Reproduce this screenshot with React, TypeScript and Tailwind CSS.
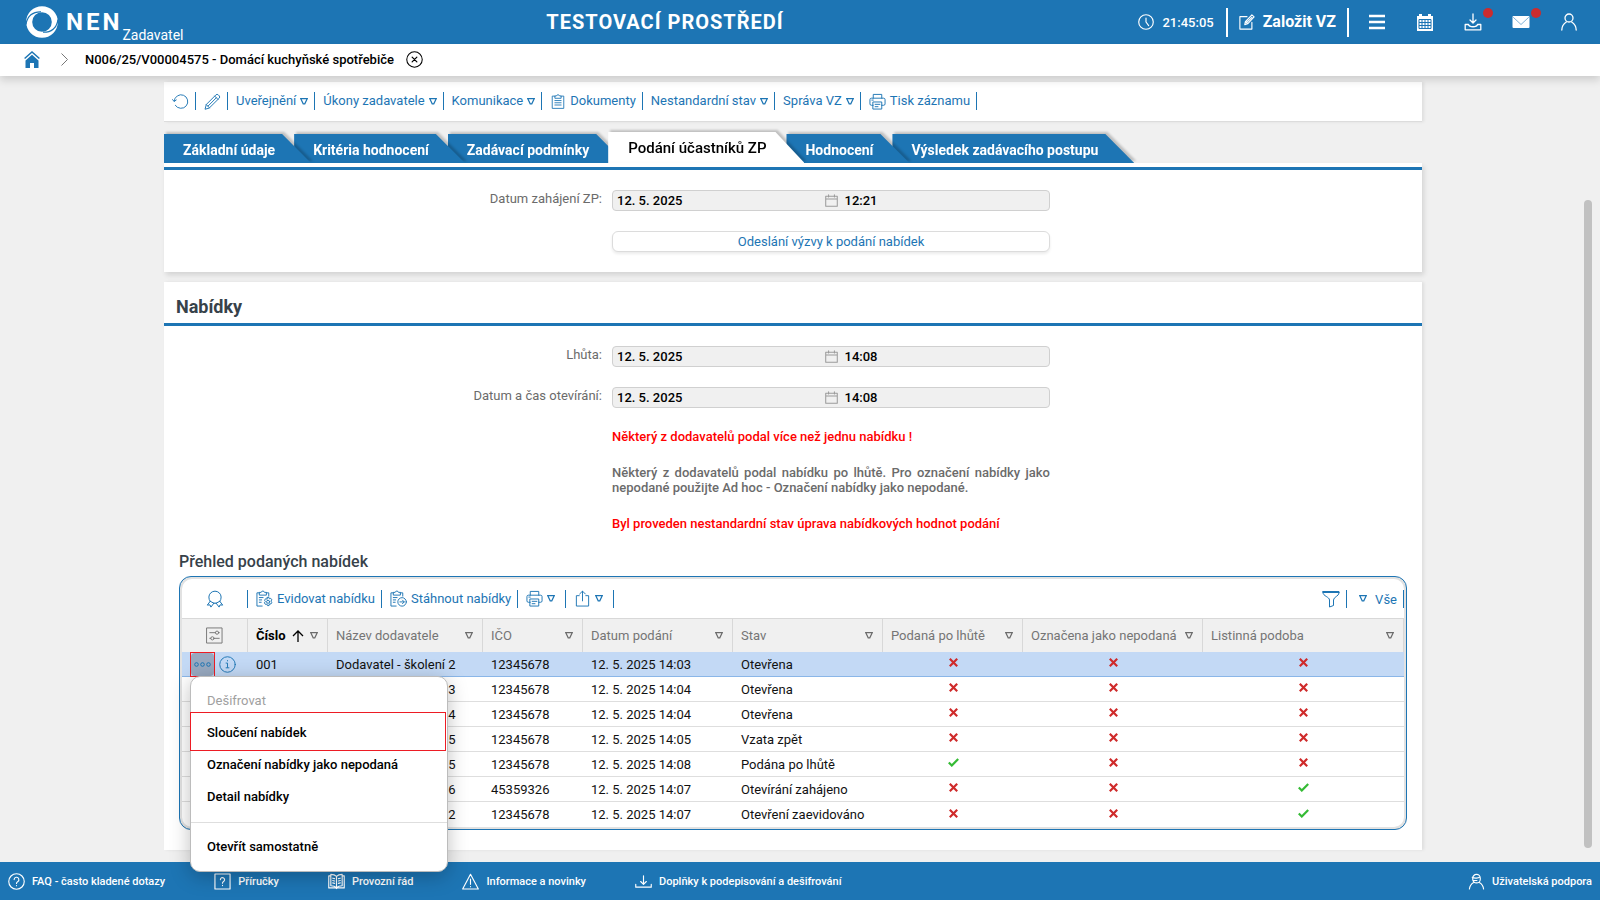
import React from 'react';
import clsx from 'clsx';

type IconProps = { className?: string; children: React.ReactNode };

function Icon({ className = 'size-[18px]', children }: IconProps) {
  return (
    <svg
      viewBox="0 0 18 18"
      fill="none"
      stroke="currentColor"
      strokeLinecap="round"
      strokeLinejoin="round"
      className={clsx('shrink-0', className)}
      aria-hidden="true"
    >
      {children}
    </svg>
  );
}

function Triangle({ className = '' }: { className?: string }) {
  return (
    <svg
      viewBox="0 0 8 7"
      fill="none"
      stroke="currentColor"
      strokeWidth="1.2"
      className={clsx('w-2 h-[7px] shrink-0', className)}
      aria-hidden="true"
    >
      <path d="M0.8 0.7h6.4L4.8 5.8H3.2z" />
    </svg>
  );
}

const icons = {
  reload: (
    <Icon className="size-[17px]">
      <path d="M2.3 8.5a7.2 7.2 0 1 1 1.2 4.6M0.6 7l1.7 2 2.2-1.6" />
    </Icon>
  ),
  pencil: (
    <Icon className="size-[17px]">
      <path d="M1.2 16.8l1.2-4.6L12.6 2a1.8 1.8 0 0 1 2.5 0l1 1a1.8 1.8 0 0 1 0 2.5L5.8 15.7zM2.4 12.2l3.4 3.5M11.3 3.3l3.5 3.5M4.3 13.8l8.7-8.7" />
    </Icon>
  ),
  clipboard: (
    <Icon className="size-4">
      <path d="M5.5 3.5H2.5v13.800h13V3.500h-3M5.500 5.500V3.300h1.700a1.900 1.900 0 0 1 3.600 0h1.700v2.200zM5.500 8.500h7M5.500 11h7M5.500 13.500h7" />
    </Icon>
  ),
  printer: (
    <Icon className="size-[17px]">
      <path d="M4.500 5.500v-4h9v4M4.500 13H2.500a1.500 1.500 0 0 1-1.500-1.500V7a1.500 1.500 0 0 1 1.500-1.500h13A1.500 1.500 0 0 1 17 7v4.500a1.500 1.500 0 0 1-1.500 1.500h-2M4.500 9.500h9v7.500h-9zM6.500 12h5M6.500 14.500h3M3 7.500h1.500" />
    </Icon>
  ),
  ribbon: (
    <Icon>
      <path d="M13.800 11.300a6.200 6.200 0 1 0-9.600 0M4.200 11.300l-2.900 3.800 2.700-.2.900 2.200 3-3.900M4.200 11.300l3.700 1.900M13.800 11.300l2.900 3.800-2.700-.2-.9 2.200-3-3.900M13.800 11.300l-3.700 1.900M7.900 13.200h2.200" />
    </Icon>
  ),
  clipGear: (
    <Icon className="size-[17px]">
      <path d="M6.500 17H1V3H3.500M11 3h2.500v3.500M3.500 5V2.500h2a1.800 1.800 0 0 1 3.500 0h2V5zM3.500 8h4M3.500 10.500h2.500M3.500 13h2" />
      <circle cx="12.800" cy="12.500" r="1.600" />
      <path d="M12 7.800h1.700l.4 1.500 1.500-.5 1.200 1.600-1 1.300.9 1.400-.8 1.700-1.700-.1-.4 1.800h-1.700l-.6-1.600-1.600.3-1-1.600 1-1.400-.8-1.300.9-1.600 1.600.3z" />
    </Icon>
  ),
  clipArrow: (
    <Icon className="size-[17px]">
      <path d="M6.500 17H1V3H3.500M11 3h2.500v3.500M3.500 5V2.500h2a1.800 1.800 0 0 1 3.500 0h2V5zM3.500 8h4M3.500 10.500h2.500M3.500 13h2" />
      <circle cx="12.800" cy="12.600" r="4.500" />
      <path d="M10.500 12.600h4.500M13.200 10.700l1.900 1.900-1.900 1.900" />
    </Icon>
  ),
  share: (
    <Icon className="size-[17px]">
      <path d="M5.500 6H2.500v11h13V6h-3M9 11.500V1.500M6 4.200l3-3 3 3" />
    </Icon>
  ),
  funnel: (
    <Icon>
      <path d="M1 1.500h16v1.500c0 3-5.500 4-5.500 7v5.500L7.500 17v-7C7.500 7 1 6 1 3zM1 2.500h16" />
    </Icon>
  ),
};

type ToolItem = { label?: string; icon?: React.ReactNode; menu?: boolean; title?: string };

const recordActions: ToolItem[] = [
  { icon: icons.reload, title: 'Obnovit' },
  { icon: icons.pencil, title: 'Upravit' },
  { label: 'Uveřejnění', menu: true },
  { label: 'Úkony zadavatele', menu: true },
  { label: 'Komunikace', menu: true },
  { label: 'Dokumenty', icon: icons.clipboard },
  { label: 'Nestandardní stav', menu: true },
  { label: 'Správa VZ', menu: true },
  { label: 'Tisk záznamu', icon: icons.printer },
];

const gridActions: ToolItem[] = [
  { label: 'Evidovat nabídku', icon: icons.clipGear },
  { label: 'Stáhnout nabídky', icon: icons.clipArrow },
  { icon: icons.printer, menu: true, title: 'Tisk' },
  { icon: icons.share, menu: true, title: 'Export' },
];

const tabs = [
  'Základní údaje',
  'Kritéria hodnocení',
  'Zadávací podmínky',
  'Podání účastníků ZP',
  'Hodnocení',
  'Výsledek zadávacího postupu',
];
const tabLayers = ['z-6', 'z-5', 'z-4', 'z-10', 'z-2', 'z-1'];

const columns = [
  { label: 'Číslo', width: 'w-20', sorted: true },
  { label: 'Název dodavatele', width: 'w-[155px]' },
  { label: 'IČO', width: 'w-[100px]' },
  { label: 'Datum podání', width: 'w-[150px]' },
  { label: 'Stav', width: 'w-[150px]' },
  { label: 'Podaná po lhůtě', width: 'w-[140px]' },
  { label: 'Označena jako nepodaná', width: 'w-[180px]' },
  { label: 'Listinná podoba', width: '' },
];

const offers = [
  { no: '001', name: 'Dodavatel - školení 2', ico: '12345678', date: '12. 5. 2025 14:03', state: 'Otevřena', flags: [false, false, false] },
  { no: '002', name: 'Dodavatel - školení 3', ico: '12345678', date: '12. 5. 2025 14:04', state: 'Otevřena', flags: [false, false, false] },
  { no: '003', name: 'Dodavatel - školení 4', ico: '12345678', date: '12. 5. 2025 14:04', state: 'Otevřena', flags: [false, false, false] },
  { no: '004', name: 'Dodavatel - školení 5', ico: '12345678', date: '12. 5. 2025 14:05', state: 'Vzata zpět', flags: [false, false, false] },
  { no: '005', name: 'Dodavatel - školení 5', ico: '12345678', date: '12. 5. 2025 14:08', state: 'Podána po lhůtě', flags: [true, false, false] },
  { no: '006', name: 'Dodavatel - školení 6', ico: '45359326', date: '12. 5. 2025 14:07', state: 'Otevírání zahájeno', flags: [false, false, true] },
  { no: '007', name: 'Dodavatel - školení 2', ico: '12345678', date: '12. 5. 2025 14:07', state: 'Otevření zaevidováno', flags: [false, false, true] },
];

function ToolButton({ item }: { item: ToolItem }) {
  return (
    <button
      type="button"
      aria-label={item.label ? undefined : item.title}
      className={clsx(
        'flex items-center gap-1 h-[18px] pl-2 border-r border-[#1d75b4]',
        item.label || !item.menu ? 'pr-1.5' : 'pr-2.5',
      )}
    >
      {item.icon}
      {item.label && <span className="pb-px">{item.label}</span>}
      {item.menu && <Triangle />}
    </button>
  );
}

function DateTimeField({ id, label, date, time }: { id: string; label: string; date: string; time: string }) {
  return (
    <>
      <label htmlFor={id} className="text-right text-[#6b6b6b] leading-[18px]">
        {label}:
      </label>
      <div className="grid grid-cols-[208fr_225fr] h-[21px] pl-1 bg-[#f0f0f0] border border-[#d0d0d0] rounded-[4px] font-medium text-black">
        <input id={id} readOnly value={date} className="min-w-0 outline-none" />
        <div className="flex items-center gap-[7px]">
          <Icon className="size-[13px] text-[#9a9a9a]">
            <path strokeWidth="1.400" d="M1 3h16v14H1zM1 7h16M5 1v3M13 1v3" />
          </Icon>
          <input readOnly value={time} aria-label={`${label} – čas`} className="min-w-0 flex-1 outline-none" />
        </div>
      </div>
      <div />
    </>
  );
}

function Flag({ on }: { on: boolean }) {
  return on ? (
    <svg viewBox="0 0 11 9" className="mx-auto mb-[3px] w-[11px] h-[9px]" fill="none" stroke="#35bb35" strokeWidth="2.200" role="img" aria-label="Ano">
      <path d="M0.800 4.500l3 3L10.200 1" />
    </svg>
  ) : (
    <svg viewBox="0 0 9 9" className="mx-auto mb-[3px] size-[9px]" fill="none" stroke="#cf2a2a" strokeWidth="2.200" role="img" aria-label="Ne">
      <path d="M0.800 0.800l7.400 7.400M8.200 0.800L0.800 8.200" />
    </svg>
  );
}

function RowMenu() {
  return (
    <div
      role="menu"
      className="absolute left-0 top-6 z-30 w-[258px] h-[196px] pt-[7px] bg-white border border-[#bcbcbc] rounded-[10px] shadow-[0_4px_20px_rgba(0,0,0,0.25)] font-medium text-black"
    >
      <button type="button" role="menuitem" disabled className="block w-full h-8 px-4 text-left font-normal text-[#a0a0a0]">
        Dešifrovat
      </button>
      <button
        type="button"
        role="menuitem"
        className="relative block w-full h-8 px-4 text-left before:absolute before:-left-px before:right-px before:-top-1 before:-bottom-[3px] before:border before:border-[#ed1c24]"
      >
        Sloučení nabídek
      </button>
      <button type="button" role="menuitem" className="block w-full h-8 px-4 text-left">
        Označení nabídky jako nepodaná
      </button>
      <button type="button" role="menuitem" className="block w-full h-8 px-4 text-left">
        Detail nabídky
      </button>
      <hr className="mt-2.5 mb-[7px] border-[#dedede]" />
      <button type="button" role="menuitem" className="block w-full h-8 px-4 text-left">
        Otevřít samostatně
      </button>
    </div>
  );
}

function Header() {
  return (
    <header className="flex items-center h-11 pl-[26px] pr-[22px] bg-[#1d75b4] text-white">
      <a href="#" className="flex items-center h-full">
        <svg viewBox="0 0 32 32" className="size-8" aria-hidden="true">
          <circle cx="16" cy="16" r="12.800" fill="none" stroke="#fff" strokeWidth="6" />
          <path d="M0 18.500C1 10 7 5.500 15 5.800M32 13.500C31 22 25 26.500 17 26.200" fill="none" stroke="#1d75b4" strokeWidth="1.300" />
        </svg>
        <span className="ml-2 text-2xl font-bold tracking-[3px]">NEN</span>
        <span className="mt-[26px] text-sm leading-4">Zadavatel</span>
      </a>
      <h1 className="flex-1 pl-2 text-center text-xl font-bold tracking-wider">TESTOVACÍ PROSTŘEDÍ</h1>
      <div className="flex items-center gap-2 text-[13px] font-medium">
        <Icon className="size-4">
          <circle cx="9" cy="9" r="8.200" strokeWidth="1.300" />
          <path strokeWidth="1.300" d="M9 4.500V9l3 4" />
        </Icon>
        <span>21:45:05</span>
      </div>
      <button type="button" className="flex items-center gap-2 h-[29px] mx-3 px-[11px] border-x-2 border-white text-base font-bold leading-5">
        <Icon className="size-4">
          <path strokeWidth="1.300" d="M9 3H1v14h13.500V9.500M6.500 12l.7-3.300L14.500 1l2.500 2.300-7.300 7.700zM7.500 8.500l2.300 2.300M8.500 9.800l6-6" />
        </Icon>
        Založit VZ
      </button>
      <nav className="flex items-center gap-[30px] pl-[7px]">
        <button type="button" aria-label="Menu">
          <Icon>
            <path strokeWidth="2.600" strokeLinecap="butt" d="M1 3h16M1 9h16M1 15h16" />
          </Icon>
        </button>
        <button type="button" aria-label="Kalendář">
          <Icon>
            <path fill="currentColor" stroke="none" d="M1 3h2V1h3v2h6V1h3v2h2v15H1z" />
            <path stroke="#1d75b4" strokeLinecap="butt" d="M3 6.500h12v9H3zM3 9.500h12M3 12.500h12M6 6.500v9M9 6.500v9M12 6.500v9" />
          </Icon>
        </button>
        <button type="button" aria-label="Stažené soubory" className="relative">
          <Icon>
            <path strokeWidth="1.300" d="M9 1v8.500M6 7l3 3 3-3M4.500 11.500H1.200v5.300h15.600v-5.300h-3.300c-.7 3-8.300 3-9 0z" />
          </Icon>
          <span className="absolute -top-[5px] -right-[11px] size-2.5 rounded-full bg-[#cb2c2e]" />
        </button>
        <button type="button" aria-label="Zprávy" className="relative">
          <Icon>
            <rect x="0.500" y="3" width="17" height="12" rx="1" fill="currentColor" stroke="none" />
            <path stroke="#7fb2d8" d="M1.500 4.500L9 11.500l7.500-7" />
          </Icon>
          <span className="absolute -top-[5px] -right-[11px] size-2.5 rounded-full bg-[#cb2c2e]" />
        </button>
        <button type="button" aria-label="Uživatel">
          <Icon>
            <circle cx="9" cy="5" r="4" strokeWidth="1.300" />
            <path strokeWidth="1.300" d="M1.800 17c0-4.500 2.200-6.500 4.500-8M16.200 17c0-4.500-2.200-6.500-4.500-8" />
          </Icon>
        </button>
      </nav>
    </header>
  );
}

function Breadcrumb() {
  return (
    <nav className="relative z-20 flex items-center h-8 pl-6 pb-px bg-white shadow-[0_4px_8px_rgba(0,0,0,0.15)] text-[13px]">
      <a href="#" aria-label="Domů" className="text-[#1d75b4]">
        <svg viewBox="0 0 16 17" className="w-4 h-[17px]" aria-hidden="true">
          <path d="M0.600 7.500L8 1l7.400 6.500" fill="none" stroke="currentColor" strokeWidth="1.500" />
          <path d="M1.500 9.500L8 3.800l6.500 5.700V17H10v-5H6v5H1.500z" fill="currentColor" />
        </svg>
      </a>
      <svg viewBox="0 0 7 13" className="ml-[21px] w-[7px] h-[13px]" fill="none" stroke="#777" aria-hidden="true">
        <path d="M0.500 0.500l6 6-6 6" />
      </svg>
      <span className="ml-[17px] pb-px font-medium text-black">N006/25/V00004575 - Domácí kuchyňské spotřebiče</span>
      <button type="button" aria-label="Zavřít" className="ml-3 text-black">
        <Icon className="size-[17px]">
          <circle cx="9" cy="9" r="8.200" strokeWidth="1.100" />
          <path strokeWidth="1.300" d="M6.500 6.500l5 5M11.500 6.500l-5 5" />
        </Icon>
      </button>
    </nav>
  );
}

function OffersTable() {
  return (
    <div className="mx-[15px] mt-[5px] p-[2px] bg-[#e2e2e2] border border-[#1d75b4] rounded-xl">
      <div className="bg-white rounded-[10px]">
        <div className="flex items-center h-[39px] text-[#1d75b4]">
          <button type="button" aria-label="Hodnocení nabídek" className="flex justify-center w-[66px] h-[18px] border-r border-[#1d75b4]">
            {icons.ribbon}
          </button>
          {gridActions.map((item, i) => (
            <ToolButton key={i} item={item} />
          ))}
          <div className="flex-1" />
          <button type="button" aria-label="Filtr" className="px-1.5 border-r border-[#1d75b4]">
            {icons.funnel}
          </button>
          <button type="button" className="flex items-center gap-2 h-[18px] pl-3 pr-1.5 border-r border-[#1d75b4]">
            <Triangle />
            <span className="pt-0.5">Vše</span>
          </button>
        </div>
        <table className="w-full table-fixed border-separate border-spacing-0 text-left">
          <thead>
            <tr className="h-[34px] bg-[#f0f0f0] text-[#757575]">
              <th className="w-[66px] p-0 border-t border-r border-[#d8d8d8]">
                <button type="button" aria-label="Nastavení sloupců" className="block mx-auto">
                  <Icon className="size-[17px]">
                    <path d="M1 1h16v16H1zM4 6h6M13.500 6H14M4 12h1M9 12h5" />
                    <circle cx="11.700" cy="6" r="1.700" />
                    <circle cx="6.800" cy="12" r="1.700" />
                  </Icon>
                </button>
              </th>
              {columns.map((col) => (
                <th
                  key={col.label}
                  className={clsx(
                    'p-0 border-t border-r border-[#d8d8d8] whitespace-nowrap',
                    col.width,
                    col.sorted ? 'font-bold text-black' : 'font-normal',
                  )}
                >
                  <div className="flex items-center pl-2 pr-[9px]">
                    {col.label}
                    {col.sorted && (
                      <svg viewBox="0 0 12 12" className="ml-1.5 size-3" fill="none" stroke="currentColor" strokeWidth="1.300" aria-hidden="true">
                        <path d="M6 12V1M1 6l5-5 5 5" />
                      </svg>
                    )}
                    <Triangle className="ml-auto text-[#6b6b6b]" />
                  </div>
                </th>
              ))}
            </tr>
          </thead>
          <tbody className="text-[#111]">
            {offers.map((offer, i) => {
              const selected = i === 0;
              const last = i === offers.length - 1;
              const cell = clsx(
                'h-[25px] py-0 pr-0 whitespace-nowrap',
                !last && 'border-b',
                selected ? 'border-[#8ab6e8]' : 'border-[#dedede]',
              );
              const textCell = clsx(cell, 'pl-2');
              return (
                <tr key={offer.no} className={selected ? 'bg-[#c3d9f5]' : ''}>
                  <td className={textCell}>
                    {selected && (
                      <div className="relative flex items-center gap-1 h-6 text-[#1d75b4]">
                        <button type="button" aria-label="Akce řádku" className="w-[25px] h-[25px] border border-[#ed1c24]">
                          <span className="flex items-center justify-center h-full rounded-[4px] bg-[#98a9c0]">
                            <svg viewBox="0 0 17 5" className="w-[17px] h-[5px]" fill="none" stroke="currentColor" aria-hidden="true">
                              <circle cx="2.500" cy="2.500" r="1.800" />
                              <circle cx="8.500" cy="2.500" r="1.800" />
                              <circle cx="14.500" cy="2.500" r="1.800" />
                            </svg>
                          </span>
                        </button>
                        <button type="button" aria-label="Informace">
                          <Icon className="size-[17px]">
                            <circle cx="9" cy="9" r="8.200" />
                            <path d="M7.500 7.500H9v4.500M7.500 12.500h3M9 4.800v.4" />
                          </Icon>
                        </button>
                        <RowMenu />
                      </div>
                    )}
                  </td>
                  <td className={textCell}>{offer.no}</td>
                  <td className={textCell}>{offer.name}</td>
                  <td className={textCell}>{offer.ico}</td>
                  <td className={textCell}>{offer.date}</td>
                  <td className={textCell}>{offer.state}</td>
                  {offer.flags.map((flag, j) => (
                    <td key={j} className={clsx(cell, 'pl-0')}>
                      <Flag on={flag} />
                    </td>
                  ))}
                </tr>
              );
            })}
          </tbody>
        </table>
      </div>
    </div>
  );
}

const footerLinks = [
  {
    label: 'FAQ - často kladené dotazy',
    drawing: (
      <>
        <circle cx="9" cy="9" r="8.200" />
        <path d="M6.500 7a2.500 2.500 0 1 1 3.700 2.200c-.9.500-1.200.9-1.200 1.800M9 13.200v.3" />
      </>
    ),
  },
  {
    label: 'Příručky',
    drawing: <path d="M1 1h16v16H1zM6.800 7a2.200 2.200 0 1 1 3.300 2c-.8.500-1.100.9-1.100 1.800M9 13v.3" />,
  },
  {
    label: 'Provozní řád',
    drawing: (
      <path d="M9 3.500C7.500 2 5.500 1.500 3 1.500v12c2.500 0 4.500.5 6 2 1.500-1.500 3.500-2 6-2v-12c-2.500 0-4.500.5-6 2zM9 3.500v12M3 3H.8v12.800h7.400l.8.700.8-.7h7.400V3H15M5 5.500l2 .5M5 8l2 .5M5 10.500l2 .5M13 5.500l-2 .5M13 8l-2 .5M13 10.500l-2 .5" />
    ),
  },
  {
    label: 'Informace a novinky',
    drawing: <path d="M9 1.300L17.300 17H.7zM9 6.500v5.500M9 14.300v.3" />,
  },
  {
    label: 'Doplňky k podepisování a dešifrování',
    drawing: <path d="M9 3v8.500M6 9l3 3 3-3M.8 12v3h16.400v-3" />,
  },
];

function Footer() {
  return (
    <footer className="flex items-center h-[38px] px-2 mt-auto bg-[#1d75b4] text-white text-[11px] font-medium">
      <nav className="flex gap-[49px] flex-1">
        {footerLinks.map((link) => (
          <a key={link.label} href="#" className="flex items-center gap-[7px]">
            <Icon className="size-[17px] stroke-[1.2]">{link.drawing}</Icon>
            {link.label}
          </a>
        ))}
      </nav>
      <a href="#" className="flex items-center gap-[7px]">
        <Icon className="size-[17px] stroke-[1.2]">
          <path d="M5 5.500a4 4 0 0 1 8 0v1a4 4 0 0 1-8 0zM4.500 4.500C7 6 11 5.500 12.500 4M5.500 8h4M1.500 17c.3-3 1.800-5.500 4.500-7M16.500 17c-.3-3-1.800-5.500-4.500-7" />
        </Icon>
        Uživatelská podpora
      </a>
    </footer>
  );
}

export default function App() {
  return (
    <div className="flex flex-col min-h-screen bg-[#f0f0f0] font-['Roboto',sans-serif] text-[13px] leading-[15px]">
      <Header />
      <Breadcrumb />

      {/* Record toolbar and tabs */}
      <div className="pl-[164px] pr-[178px] pt-1.5">
        <div className="h-10 pt-2.5 bg-white border-b border-[#dcdcdc] shadow-[2px_0_3px_rgba(0,0,0,0.08)]">
          <div className="flex items-center text-[#1d75b4]">
            {recordActions.map((item, i) => (
              <ToolButton key={i} item={item} />
            ))}
          </div>
        </div>
        <div role="tablist" className="flex items-end h-[31px] mt-2.5">
          {tabs.map((tab, i) => {
            const active = i === 3;
            return (
              <div
                key={tab}
                className={clsx(
                  'relative drop-shadow-[2px_-2px_1px_rgba(0,0,0,0.2)]',
                  tabLayers[i],
                  active ? '-mr-[18px]' : '-mr-[17px]',
                )}
              >
                <button
                  type="button"
                  role="tab"
                  aria-selected={active}
                  className={clsx(
                    'block pt-0.5 whitespace-nowrap [clip-path:polygon(0_0,calc(100%-29px)_0,100%_100%,0_100%)]',
                    active
                      ? 'h-[31px] pl-5 pr-[38px] bg-white text-[15px] font-medium text-black'
                      : 'h-[29px] pl-[19px] pr-9 bg-[#1d75b4] text-sm font-bold text-white',
                  )}
                >
                  {tab}
                </button>
              </div>
            );
          })}
        </div>
      </div>

      <div className="relative z-10 flex">
        <main className="flex-1 min-w-0 pl-[164px]">
          <section className="pt-1 bg-white shadow-[2px_3px_5px_rgba(0,0,0,0.12)]">
            <div className="h-[3px] bg-[#1d75b4]" />
            <div className="grid grid-cols-[438fr_438fr_362fr] gap-x-[10px] gap-y-5 py-5">
              <DateTimeField id="start" label="Datum zahájení ZP" date="12. 5. 2025" time="12:21" />
              <button
                type="button"
                className="col-start-2 h-[21px] bg-white border border-[#dcdcdc] rounded-md shadow-[0_2px_3px_rgba(0,0,0,0.08)] text-[#1d75b4]"
              >
                Odeslání výzvy k podání nabídek
              </button>
            </div>
          </section>

          <section className="mt-2.5 pb-5 bg-white shadow-[2px_0_3px_rgba(0,0,0,0.08)]">
            <h2 className="h-[41px] pl-3 pt-[13px] text-lg leading-6 font-bold text-[#37424a]">Nabídky</h2>
            <div className="h-[3px] bg-[#1d75b4]" />
            <div className="grid grid-cols-[438fr_438fr_362fr] gap-x-[10px] gap-y-5 pt-5 pb-[22px]">
              <DateTimeField id="deadline" label="Lhůta" date="12. 5. 2025" time="14:08" />
              <DateTimeField id="opening" label="Datum a čas otevírání" date="12. 5. 2025" time="14:08" />
              <div className="col-start-2 flex flex-col gap-[21px] pt-px font-medium text-[#ff0000]">
                <p>Některý z dodavatelů podal více než jednu nabídku !</p>
                <p className="text-justify text-[#6b6b6b]">
                  Některý z dodavatelů podal nabídku po lhůtě. Pro označení nabídky jako nepodané použijte Ad hoc -
                  Označení nabídky jako nepodané.
                </p>
                <p>Byl proveden nestandardní stav úprava nabídkových hodnot podání</p>
              </div>
            </div>
            <h3 className="pl-[15px] text-base leading-[18px] font-medium text-[#37424a]">Přehled podaných nabídek</h3>
            <OffersTable />
          </section>
        </main>
        <div className="w-[178px] flex justify-end pr-2 pt-[37px] pb-0.5">
          <div className="w-2 rounded-full bg-[#c1c1c1]" />
        </div>
      </div>

      <Footer />
    </div>
  );
}
